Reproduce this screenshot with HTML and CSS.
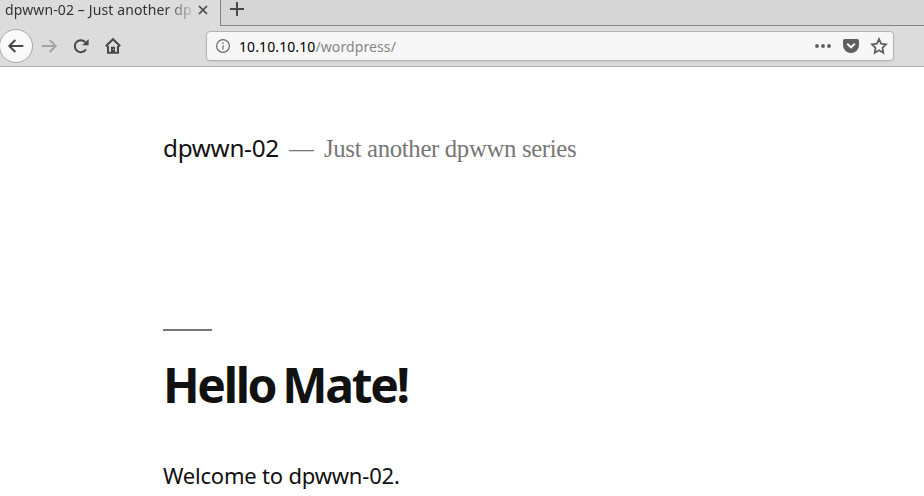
FILE: index.html
```html
<!DOCTYPE html>
<html lang="en">
<head>
<meta charset="utf-8">
<title>dpwwn-02 – Just another dpwwn series</title>
<link rel="stylesheet" href="styles.css">
</head>
<body>
<div class="tabs">
  <div class="tab">
    <span class="tab-title">dpwwn-02 – Just another dp</span>
    <svg class="close" viewBox="0 0 10 10"><path d="M1 1l8 8M9 1L1 9"/></svg>
  </div>
  <div class="strip"><svg class="plus" viewBox="0 0 14 14"><path d="M7 0v14M0 7h14"/></svg></div>
</div>
<div class="toolbar">
  <div class="back"><svg class="icon" viewBox="0 0 16 16"><path d="M15.3 8H1.5M7.3 2L1.3 8l6 6"/></svg></div>
  <svg class="icon forward" viewBox="0 0 16 16"><path d="M.7 8h13.8M8.7 2l6 6-6 6"/></svg>
  <svg class="icon reload" viewBox="0 0 16 16"><path d="M13 11.2A6 6 0 1 1 12.2 4"/><path class="fill" d="M15.6 1v6.2H9.2z"/></svg>
  <svg class="icon home" viewBox="0 0 16 16"><path d="M.8 8.3L8 1.2l7.2 7.1M3 8v6.8h10V8"/><path class="fill" d="M6 15V8.7h4V15z"/><path class="knob" d="M8 11h1v1H8z"/></svg>
  <div class="urlbar">
    <svg class="info" viewBox="0 0 14 14"><circle cx="7" cy="7" r="6.4"/><path d="M7 6.2v4.2M7 3.3v1.6"/></svg>
    <span class="url"><span class="host">10.10.10.10</span>/wordpress/</span>
    <svg class="dots" viewBox="0 0 16 16"><circle cx="2" cy="8" r="1.9"/><circle cx="8" cy="8" r="1.9"/><circle cx="14" cy="8" r="1.9"/></svg>
    <svg class="pocket" viewBox="0 0 16 16"><path class="fill" d="M1.7 1h12.6Q16 1 16 2.8V7A8 8 0 0 1 0 7V2.8Q0 1 1.7 1z"/><path class="check" d="M4.2 5.7L8 9.3l3.8-3.6"/></svg>
    <svg class="star" viewBox="0 0 16 16"><path d="M8 1.1l2.1 4.5 4.9.7-3.5 3.5.8 4.9L8 12.3l-4.3 2.4.8-4.9L1 6.3l4.9-.7z"/></svg>
  </div>
</div>
<main class="page">
  <header class="site">
    <span class="name">dpwwn-02</span>
    <span class="dash">—</span>
    <span class="tagline">Just another dpwwn series</span>
  </header>
  <article>
    <h1>Hello Mate!</h1>
    <p>Welcome to dpwwn-02.</p>
  </article>
</main>
</body>
</html>
```

FILE: styles.css
```css
* { box-sizing: border-box; }
body {
  margin: 0;
  height: 496px;
  overflow: hidden;
  background: #fff;
  color: #111;
  font-family: "Noto Sans", sans-serif;
}
svg { display: block; flex: none; overflow: visible; fill: none; stroke: #484848; stroke-width: 2; }
.tabs { display: flex; height: 26px; background: #dcdcdc; }
.tab { display: flex; width: 220px; padding-left: 5px; }
.tab-title {
  width: 187px;
  height: 20px;
  white-space: nowrap;
  font-size: 14px;
  line-height: 20px;
  letter-spacing: .12px;
  color: #333;
  -webkit-mask-image: linear-gradient(to right, #000 160px, transparent 192px);
  mask-image: linear-gradient(to right, #000 160px, transparent 192px);
}
.close { width: 10px; height: 10px; margin: 5px 0 0 6px; stroke-width: 1.7; }
.strip { flex: 1; padding: 2px 0 0 9px; background: #d6d6d6; border-left: 1px solid #858585; border-bottom: 1px solid #858585; }
.plus { width: 14px; height: 14px; }
.toolbar { display: flex; align-items: center; height: 41px; background: #dcdcdc; border-bottom: 1px solid #b0b0b0; }
.back {
  display: flex;
  align-items: center;
  justify-content: center;
  width: 34px;
  height: 34px;
  margin-left: -1px;
  border: 1px solid #a6a6a6;
  border-radius: 50%;
  background: #f9f9f9;
}
.icon { width: 16px; height: 16px; }
.fill { fill: #484848; stroke: none; }
.knob { fill: #dcdcdc; stroke: none; }
.forward { margin-left: 8px; stroke: #a4a4a4; }
.reload { margin-left: 16px; }
.home { margin-left: 16px; }
.urlbar {
  display: flex;
  align-items: center;
  width: 688px;
  height: 30px;
  margin-left: 85px;
  padding: 0 6px 0 9px;
  border: 1px solid #b3b3b3;
  border-radius: 4px;
  background: #f7f7f7;
  box-shadow: 0 1px 2px rgba(0, 0, 0, .08);
}
.info { width: 14px; height: 14px; stroke: #6b6b6b; stroke-width: 1.2; }
.url { flex: 1; margin-left: 9px; padding-top: 1px; font-size: 14px; line-height: 20px; letter-spacing: .1px; color: #858585; white-space: nowrap; }
.host { color: #000; }
.dots { width: 16px; height: 16px; fill: #5e5e5e; stroke: none; }
.pocket { width: 16px; height: 16px; margin-left: 12px; }
.pocket .fill { fill: #5e5e5e; }
.check { stroke: #f7f7f7; }
.star { width: 16px; height: 16px; margin-left: 12px; stroke: #5e5e5e; stroke-width: 1.8; }
.page { padding: 64px 0 0 163px; }
.site { display: flex; height: 36px; font-size: 24.3px; line-height: 36px; white-space: nowrap; }
.name { width: 126px; line-height: 34px; letter-spacing: -.3px; }
.dash, .tagline { font-family: "Liberation Serif", serif; font-size: 24.75px; color: #767676; }
.dash { width: 35px; }
.tagline { letter-spacing: -.33px; }
article { margin-top: 162px; }
article::before { content: ""; display: block; width: 49px; height: 2px; background: #767676; }
h1 { margin: 24px 0 0; height: 60px; font-size: 48px; line-height: 60px; font-weight: 700; letter-spacing: -2.35px; word-spacing: -3px; white-space: nowrap; }
p { margin: 44px 0 0; height: 32px; font-size: 22px; line-height: 32px; letter-spacing: -.2px; white-space: nowrap; }
```
